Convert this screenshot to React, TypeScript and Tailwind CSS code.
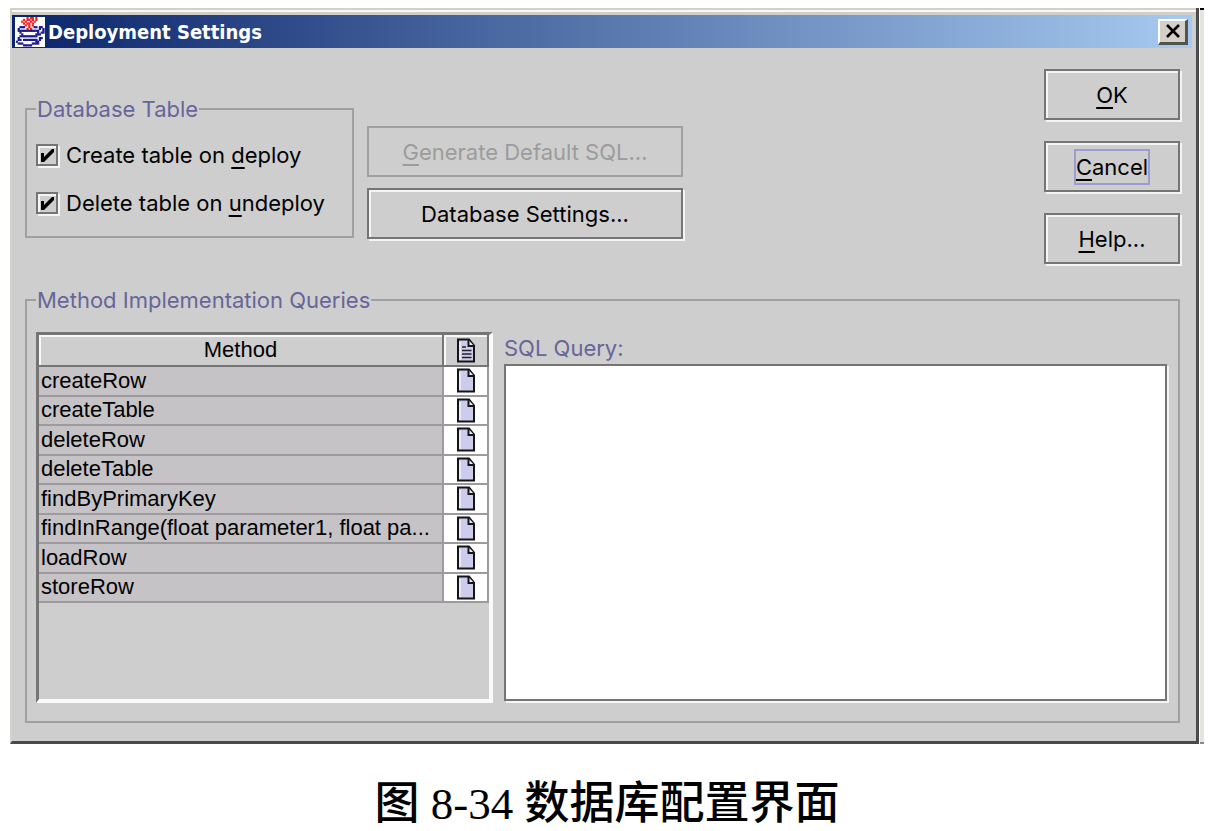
import React from "react";

const methods = [
  "createRow",
  "createTable",
  "deleteRow",
  "deleteTable",
  "findByPrimaryKey",
  "findInRange(float parameter1, float pa...",
  "loadRow",
  "storeRow",
];

const cupPixels = [
  "......R.RR.R....",
  "....R.RR.R.R....",
  "...R.R..R.R.....",
  "....R.RR.R......",
  ".....R.R.R......",
  "..BBB..R..BB.BB.",
  ".B....R.R....B.B",
  ".BBBBBBBBBBBB..B",
  "..B.........B.BB",
  "...B.......BBB..",
  "..BBBBBBBBBB....",
  ".B...........BB.",
  ".BB.BBBBBBBB.B..",
  "B..........BB...",
  ".BBB.....BBBB...",
  "....BBBBB.......",
];

function JavaIcon() {
  return (
    <svg viewBox="-0.5 0 17 16.5" preserveAspectRatio="none" className="size-[30px] shrink-0" aria-hidden="true">
      <rect x="-1" y="-1" width="19" height="19" fill="#fff" />
      {cupPixels.flatMap((row, y) =>
        [...row].map((c, x) =>
          c === "." ? null : (
            <rect key={`${x}-${y}`} x={x} y={y} width="1.25" height="1.2" fill={c === "R" ? "#f52020" : "#1a1a8c"} />
          ),
        ),
      )}
    </svg>
  );
}

function PageIcon({ lines = false }: { lines?: boolean }) {
  return (
    <svg viewBox="0 0 20 25" className="mx-auto block h-[25px] w-5" aria-hidden="true">
      <path d="M2 1.5h11l5 6v16H2z" fill="#ccccec" stroke="#151515" strokeWidth="2" />
      <path d="M4 4v18" stroke="#f2f2ff" strokeWidth="1.5" />
      <path d="M12.5 2v6H18" fill="#f0f0ff" stroke="#151515" strokeWidth="2" />
      {lines && <path d="M6 9h4M6 12.5h9.5M6 16h9.5M6 19.5h9.5" stroke="#222" strokeWidth="1.6" />}
    </svg>
  );
}

function PushButton({ children }: { children: React.ReactNode }) {
  return (
    <button
      type="button"
      className="flex h-[51px] items-center justify-center border-2 border-[#757575] shadow-[inset_2px_2px_0_#f4f4f4,2px_2px_0_#f4f4f4]"
    >
      {children}
    </button>
  );
}

function Key({ children }: { children: string }) {
  return <span className="underline decoration-2 underline-offset-4">{children}</span>;
}

function CheckRow({ id, children }: { id: string; children: React.ReactNode }) {
  return (
    <div className="flex h-6 items-center gap-2">
      <span className="grid size-[22px] shrink-0">
        <input
          id={id}
          type="checkbox"
          defaultChecked
          className="peer col-start-1 row-start-1 size-[22px] appearance-none border-2 border-[#757575] shadow-[inset_2px_2px_0_#f4f4f4,2px_2px_0_#f4f4f4]"
        />
        <svg
          viewBox="0 0 22 22"
          className="pointer-events-none invisible col-start-1 row-start-1 size-[22px] peer-checked:visible"
          aria-hidden="true"
        >
          <path d="M5 9h3v4l8-8h2v3L8 18H5z" fill="#000" />
        </svg>
      </span>
      <label htmlFor={id} className="whitespace-nowrap">
        {children}
      </label>
    </div>
  );
}

export default function App() {
  return (
    <main className="bg-white px-[10px] pt-2 font-['Inter','Liberation_Sans',sans-serif] text-[22px] leading-6 text-black">
      <div className="flex">
        <section
          aria-label="Deployment Settings"
          className="min-w-0 flex-1 border-r-[3px] border-b-[3px] border-l-2 border-r-[#4a4a4a] border-b-[#4a4a4a] border-l-[#d4d2ca] bg-[#cecece]"
        >
          <div className="h-[2px] bg-[#d4d0c8]" />
          <div className="h-[2px] bg-[#f8f8f6]" />
          <div className="h-[3px] bg-[#d0cec8]" />
          <header className="mr-1 flex h-[33px] items-center bg-linear-to-r/srgb from-[#0a246a] to-[#a6caf0] pr-1 pl-[3px]">
            <JavaIcon />
            <h1 className="ml-[3px] flex-1 font-['DejaVu_Sans_Condensed','DejaVu_Sans',sans-serif] text-xl font-bold text-white">
              Deployment Settings
            </h1>
            <button
              type="button"
              aria-label="Close"
              className="grid h-[26px] w-[30px] place-items-center border-t-2 border-r-[3px] border-b-[3px] border-l-2 border-t-white border-r-[#55534f] border-b-[#55534f] border-l-white bg-[#d4d0c8]"
            >
              <svg viewBox="0 0 16 14" className="h-[14px] w-4" aria-hidden="true">
                <path d="M2 1l12 12M14 1L2 13" stroke="#000" strokeWidth="2.6" />
              </svg>
            </button>
          </header>

          <div className="pt-[21px] pr-4 pb-[18px] pl-[13px]">
            <div className="flex items-start">
              <fieldset className="mt-7 h-[141px] w-[329px] border-2 border-[#a0a0a0] px-[9px]">
                <legend className="px-px text-[#666699]">Database Table</legend>
                <div className="mt-[22px] flex flex-col gap-6">
                  <CheckRow id="create-table">
                    Create table on <Key>d</Key>eploy
                  </CheckRow>
                  <CheckRow id="delete-table">
                    Delete table on <Key>u</Key>ndeploy
                  </CheckRow>
                </div>
              </fieldset>
              <div className="mt-[57px] ml-[13px] flex w-[316px] flex-col gap-[11px]">
                <button
                  type="button"
                  disabled
                  className="flex h-[51px] items-center justify-center border-2 border-[#a0a0a0] text-[#9c9c9c]"
                >
                  <span>
                    <Key>G</Key>enerate Default SQL...
                  </span>
                </button>
                <PushButton>Database Settings...</PushButton>
              </div>
              <div className="ml-auto flex w-[136px] flex-col gap-[21px]">
                <PushButton>
                  <Key>O</Key>K
                </PushButton>
                <PushButton>
                  <span className="border-2 border-[#9c9cce] py-1">
                    <Key>C</Key>ancel
                  </span>
                </PushButton>
                <PushButton>
                  <Key>H</Key>elp...
                </PushButton>
              </div>
            </div>

            <fieldset className="mt-6 border-2 border-[#a0a0a0] px-[9px] pb-[18px]">
              <legend className="px-px text-[#666699]">Method Implementation Queries</legend>
              <div className="flex gap-[11px] pt-5">
                <div className="h-[371px] w-[457px] shrink-0 border-t-[3px] border-r-4 border-b-4 border-l-[3px] border-t-[#757575] border-r-[#fafafa] border-b-[#fafafa] border-l-[#757575]">
                  <table className="h-[268px] w-full table-fixed border-separate border-spacing-0 font-['Liberation_Sans',Arial,sans-serif]">
                    <colgroup>
                      <col />
                      <col className="w-[45px]" />
                    </colgroup>
                    <thead>
                      <tr className="h-8">
                        <th className="border-r-2 border-b-2 border-[#757575] p-0 font-normal shadow-[inset_2px_2px_0_#f8f8f8]">
                          Method
                        </th>
                        <th
                          aria-label="SQL"
                          className="border-r-2 border-b-2 border-[#757575] p-0 shadow-[inset_2px_2px_0_#f8f8f8]"
                        >
                          <PageIcon lines />
                        </th>
                      </tr>
                    </thead>
                    <tbody>
                      {methods.map((m) => (
                        <tr key={m}>
                          <td className="border-r-2 border-b-2 border-[#9c9a9c] bg-[#c6c3c6] p-0 pl-0.5 whitespace-nowrap">
                            {m}
                          </td>
                          <td className="border-r-2 border-b-2 border-[#9c9a9c] bg-white p-0">
                            <PageIcon />
                          </td>
                        </tr>
                      ))}
                    </tbody>
                  </table>
                </div>
                <div className="mr-0.5 flex min-w-0 flex-1 flex-col gap-1 pt-1 pb-0.5">
                  <label htmlFor="sql-query" className="text-[#666699]">
                    SQL Query:
                  </label>
                  <textarea
                    id="sql-query"
                    className="min-h-0 w-full flex-1 resize-none border-2 border-[#757575] bg-white p-1 shadow-[2px_2px_0_#f4f4f4] outline-none"
                  />
                </div>
              </div>
            </fieldset>
          </div>
        </section>
        <div className="ml-px w-1 border-t-2 border-b-2 border-t-black border-b-[#8a8a8a] bg-[#e6e4de]" />
      </div>
      <p className="mt-9 text-center font-['Liberation_Serif','Noto_Sans_CJK_SC',serif] text-[45px] leading-[48px] font-medium">
        图 8-34 数据库配置界面
      </p>
    </main>
  );
}
